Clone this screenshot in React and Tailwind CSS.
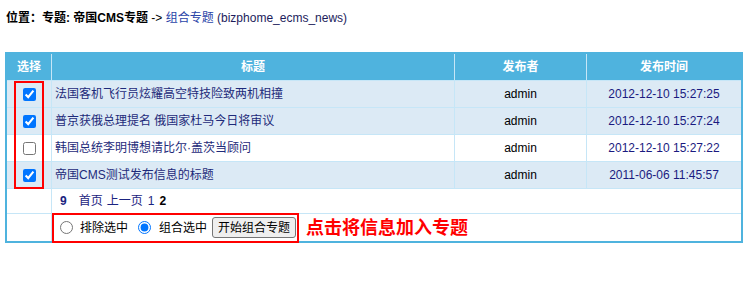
import React from "react";

const rows = [
  { t: "法国客机飞行员炫耀高空特技险致两机相撞", d: "2012-12-10 15:27:25", c: true },
  { t: "普京获俄总理提名 俄国家杜马今日将审议", d: "2012-12-10 15:27:24", c: true },
  { t: "韩国总统李明博想请比尔·盖茨当顾问", d: "2012-12-10 15:27:22", c: false },
  { t: "帝国CMS测试发布信息的标题", d: "2011-06-06 11:45:57", c: true },
];

export default function App() {
  const font = { fontFamily: "'Liberation Sans', 'Noto Sans CJK SC', sans-serif" };
  return (
    <div className="relative w-[752px] h-[290px] bg-white text-[12px] text-black" style={font}>
      <div className="h-[52px] pt-[10px] pl-[6px] leading-[16px]">
        <span className="font-bold">位置：专题: 帝国CMS专题</span>
        <span> -&gt; </span>
        <a className="text-[#2a44a8]">组合专题</a>
        <span className="text-[#1c1c5c]"> (bizphome_ecms_news)</span>
      </div>

      <div className="ml-[5px] w-[738px] border-2 border-[#4fb3de] bg-[#c6e6f7] grid grid-cols-[44px_402px_131px_1fr] gap-px">
        {["选择", "标题", "发布者", "发布时间"].map((h) => (
          <div key={h} className="h-[26px] bg-[#4fb3de] text-white font-bold flex items-center justify-center">
            {h}
          </div>
        ))}
        {rows.map((r, i) => {
          const bg = r.c ? "bg-[#dceaf5]" : "bg-white";
          return (
            <React.Fragment key={i}>
              <div className={`h-[26px] ${bg} flex items-center justify-center`}>
                <input type="checkbox" defaultChecked={r.c} className="m-0 w-[13px] h-[13px]" />
              </div>
              <div className={`h-[26px] ${bg} flex items-center pl-[3px] text-[#1e2a7a]`}>{r.t}</div>
              <div className={`h-[26px] ${bg} flex items-center justify-center text-black`}>admin</div>
              <div className={`h-[26px] ${bg} flex items-center justify-center text-[#1a1a80]`}>{r.d}</div>
            </React.Fragment>
          );
        })}
        <div className="h-[24px] bg-white" />
        <div className="col-span-3 h-[24px] bg-white flex items-center pl-[8px] text-[#1a2380]">
          <b className="mr-[12px]">9</b>
          <span className="mr-[4px]">首页</span>
          <span className="mr-[5px]">上一页</span>
          <span className="mr-[5px]">1</span>
          <b className="text-black">2</b>
        </div>
        <div className="h-[27px] bg-white" />
        <div className="col-span-3 h-[27px] bg-white flex items-center pl-[8px]">
          <input type="radio" name="m" className="m-0 w-[13px] h-[13px]" />
          <span className="ml-[7px]">排除选中</span>
          <input type="radio" name="m" defaultChecked className="m-0 ml-[10px] w-[13px] h-[13px]" />
          <span className="ml-[8px]">组合选中</span>
          <button className="ml-[5px] h-[21px] px-[5px] border border-[#767676] rounded-[3px] bg-[#efefef] text-[12px] text-black leading-none">
            开始组合专题
          </button>
          <span className="ml-[10px] text-[18px] font-bold text-[#ff0000] leading-none">点击将信息加入专题</span>
        </div>
      </div>

      <div className="absolute left-[14px] top-[81px] w-[30px] h-[108px] border-2 border-[#ff0000]" />
      <div className="absolute left-[52px] top-[213px] w-[247px] h-[30px] border-2 border-[#ff0000]" />
    </div>
  );
}
